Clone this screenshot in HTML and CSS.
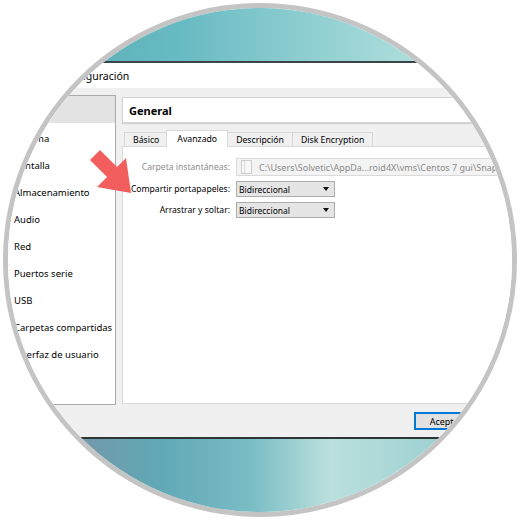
FILE: index.html
```html
<!DOCTYPE html>
<html>
<head>
	<title>Configuración</title>
	<link rel="stylesheet" href="styles.css">
</head>
<body>
<div class="frame">
    <div class="sky top"></div>

    <div class="dialog">
        <div class="titlebar">Configuración</div>

        <div class="main">
            <ul class="sections">
                <li class="selected">General</li>
                <li>Sistema</li>
                <li>Pantalla</li>
                <li>Almacenamiento</li>
                <li>Audio</li>
                <li>Red</li>
                <li>Puertos serie</li>
                <li>USB</li>
                <li>Carpetas compartidas</li>
                <li>Interfaz de usuario</li>
            </ul>

            <div class="page">
                <div class="page-title">General</div>

                <div class="tabs">
                    <div class="tab">Básico</div>
                    <div class="tab active">Avanzado</div>
                    <div class="tab">Descripción</div>
                    <div class="tab">Disk Encryption</div>
                </div>

                <div class="tab-body">
                    <label class="disabled">Carpeta instantáneas:</label>
                    <div class="path">
                        <svg width="11" height="14" viewBox="0 0 11 14">
                            <rect x="0.5" y="0.5" width="10" height="13" fill="#f7f7f7" stroke="#cdcdcd"/>
                            <line x1="3.5" y1="1" x2="3.5" y2="13" stroke="#dcdcdc"/>
                        </svg>
                        <span>C:\Users\Solvetic\AppDa...roid4X\vms\Centos 7 gui\Snapshots</span>
                    </div>

                    <label>Compartir portapapeles:</label>
                    <div class="combo">Bidireccional<span class="caret"></span></div>

                    <label>Arrastrar y soltar:</label>
                    <div class="combo">Bidireccional<span class="caret"></span></div>
                </div>
            </div>
        </div>

        <div class="buttons">
            <button class="default">Aceptar</button>
            <button>Cancelar</button>
        </div>
    </div>

    <div class="sky bottom"></div>

    <svg class="arrow" viewBox="8 8 504 504">
        <polygon points="131,193 126,158 117,167 100,150 90,160 107,177 97,187" fill="#f25d5d"/>
    </svg>
</div>
</body>
</html>
```

FILE: styles.css
```css
* {
	margin: 0;
	padding: 0;
	box-sizing: border-box;
}

body {
	background: #fff;
	font-family: "Noto Sans", "Open Sans", sans-serif;
	color: #000;
}

.frame {
	width: 514px;
	height: 514px;
	margin: 3px;
	border: 5px solid #c4c4c4;
	border-radius: 50%;
	overflow: hidden;
	position: relative;
	display: flex;
	flex-direction: column;
}

.sky.top {
	height: 55px;
	flex: none;
	border-bottom: 2px solid #3b4447;
	background: linear-gradient(to right, #55a6b1 0%, #69bbc3 35%, #a6dad9 75%, #c0e6e3 100%);
}

.sky.bottom {
	flex: 1;
	border-top: 2px solid #2e3537;
	background: linear-gradient(to right, #7a93a3 8%, #61a8b6 30%, #79bcc4 48%, #bbe0dd 64%, #a5d5d5 80%, #84c2c8 100%);
}

.dialog {
	height: 374px;
	flex: none;
	background: #f0f0f0;
	display: flex;
	flex-direction: column;
}

.titlebar {
	height: 25px;
	line-height: 26px;
	background: #fff;
	font-size: 10.5px;
	padding-left: 52px;
}

.main {
	display: flex;
	padding-top: 7px;
	height: 317px;
}

.sections {
	list-style: none;
	width: 108px;
	height: 310px;
	flex: none;
	background: #fff;
	border: 1px solid #a9a9a9;
	border-left: none;
	font-size: 9.5px;
}

.sections li {
	height: 27px;
	line-height: 23px;
	padding: 4px 0 0 6px;
	white-space: nowrap;
}

.sections li.selected {
	background: #e3e3e3;
}

.page {
	flex: 1;
	margin-left: 6px;
	display: flex;
	flex-direction: column;
}

.page-title {
	margin-top: 2px;
	height: 26px;
	line-height: 25px;
	background: #fff;
	border: 1px solid #d4d4d4;
	box-shadow: 0 1px 1px #d0d0d0;
	font-size: 11px;
	font-weight: bold;
	padding-left: 6px;
}

.tabs {
	display: flex;
	margin-top: 7px;
	padding-left: 2px;
	height: 17px;
	align-items: flex-end;
	font-size: 8.7px;
}

.tab {
	height: 15px;
	line-height: 15px;
	padding: 0 8px;
	background: #f0f0f0;
	border: 1px solid #d9d9d9;
	border-bottom: none;
	margin-right: -1px;
	white-space: nowrap;
}

.tab.active {
	height: 17px;
	line-height: 16px;
	background: #fff;
	padding: 0 10px;
	margin: 0 -1px 0 -1px;
	position: relative;
	z-index: 1;
}

.tab-body {
	height: 258px;
	background: #fff;
	border: 1px solid #d9d9d9;
	margin-top: -1px;
	padding: 11px 0 0 6px;
	display: grid;
	grid-template-columns: 101px 300px;
	grid-auto-rows: min-content;
	column-gap: 6px;
	row-gap: 5px;
	font-size: 8.6px;
}

.tab-body label {
	text-align: right;
	align-self: center;
	white-space: nowrap;
}

.tab-body label.disabled {
	color: #8d8d8d;
}

.path {
	height: 18px;
	background: #f3f3f3;
	border: 1px solid #dadada;
	display: flex;
	align-items: center;
	gap: 7px;
	padding-left: 4px;
	color: #8a8a8a;
	font-size: 9px;
	white-space: nowrap;
	overflow: hidden;
}

.combo {
	width: 99px;
	height: 16px;
	line-height: 15px;
	background: #e5e5e5;
	border: 1px solid #adadad;
	padding-left: 2px;
	position: relative;
	font-size: 8.5px;
}

.caret {
	position: absolute;
	right: 5px;
	top: 5px;
	border-left: 3.5px solid transparent;
	border-right: 3.5px solid transparent;
	border-top: 4px solid #111;
}

.buttons {
	display: flex;
	gap: 8px;
	padding: 7px 0 0 406px;
}

.buttons button {
	width: 64px;
	height: 18px;
	background: #e1e1e1;
	border: 1px solid #adadad;
	font-family: inherit;
	font-size: 9px;
	flex: none;
}

.buttons button.default {
	border: 2px solid #0078d7;
}

.arrow {
	position: absolute;
	left: 0;
	top: 0;
	width: 504px;
	height: 504px;
	pointer-events: none;
}
```
